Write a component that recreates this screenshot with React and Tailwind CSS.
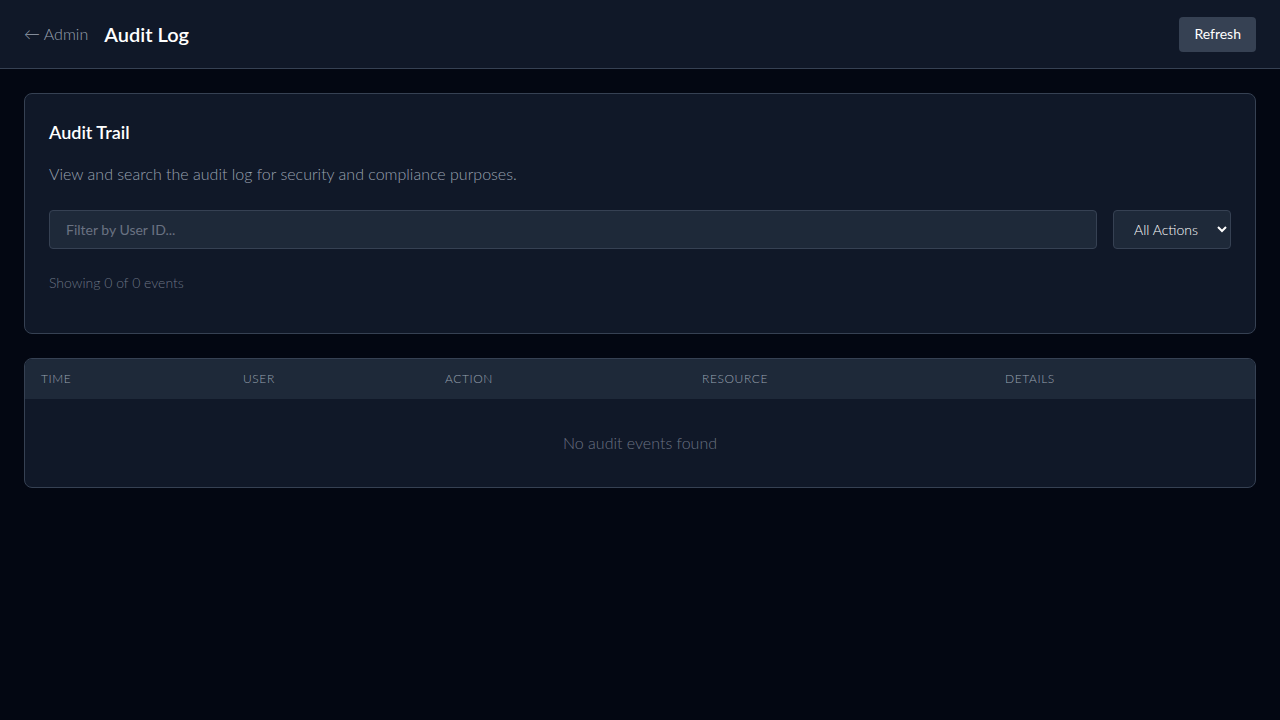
import React, { useState } from "react";

const columns = [
  { label: "Time", w: "w-[202px]" },
  { label: "User", w: "w-[202px]" },
  { label: "Action", w: "w-[257px]" },
  { label: "Resource", w: "w-[303px]" },
  { label: "Details", w: "" },
];

export default function App() {
  const [userId, setUserId] = useState("");
  const [action, setAction] = useState("all");

  return (
    <div className="min-h-screen bg-[#030712] text-gray-100 font-['Lato',sans-serif]">
      {/* Top bar */}
      <header className="h-[69px] bg-gray-900 border-b border-gray-700 px-6 flex items-center justify-between">
        <div className="flex items-center gap-4">
          <a href="#" className="text-base font-light text-gray-400 hover:text-gray-200">
            ← Admin
          </a>
          <h1 className="text-xl font-semibold text-white">Audit Log</h1>
        </div>
        <button className="h-[35px] px-[15px] rounded bg-gray-700 hover:bg-gray-600 text-sm text-white">
          Refresh
        </button>
      </header>

      <main className="p-6 flex flex-col gap-6">
        {/* Filters */}
        <section className="bg-gray-900 border border-gray-700 rounded-lg p-6 pb-10">
          <h2 className="text-lg font-semibold text-white">Audit Trail</h2>
          <p className="mt-4 text-base font-light text-gray-400">
            View and search the audit log for security and compliance purposes.
          </p>
          <div className="mt-6 flex gap-4">
            <input
              value={userId}
              onChange={(e) => setUserId(e.target.value)}
              placeholder="Filter by User ID..."
              className="flex-1 h-[39px] px-4 bg-gray-800 border border-gray-700 rounded text-sm text-gray-100 placeholder-gray-500 outline-none"
            />
            <select
              value={action}
              onChange={(e) => setAction(e.target.value)}
              className="w-[118px] h-[39px] pl-4 pr-1 bg-gray-800 border border-gray-700 rounded text-sm font-light text-white outline-none"
            >
              <option value="all">All Actions</option>
              <option value="login">Login</option>
              <option value="update">Update</option>
              <option value="delete">Delete</option>
            </select>
          </div>
          <p className="mt-6 text-sm font-light text-gray-500">Showing 0 of 0 events</p>
        </section>

        {/* Table */}
        <section className="bg-gray-900 border border-gray-700 rounded-lg overflow-hidden">
          <table className="w-full text-left">
            <thead className="bg-gray-800">
              <tr>
                {columns.map((c) => (
                  <th
                    key={c.label}
                    className={`${c.w} h-10 px-4 text-xs font-light uppercase tracking-wider text-gray-400`}
                  >
                    {c.label}
                  </th>
                ))}
              </tr>
            </thead>
            <tbody>
              <tr>
                <td colSpan={5} className="h-[88px] text-center text-base font-light text-gray-500">
                  No audit events found
                </td>
              </tr>
            </tbody>
          </table>
        </section>
      </main>
    </div>
  );
}
